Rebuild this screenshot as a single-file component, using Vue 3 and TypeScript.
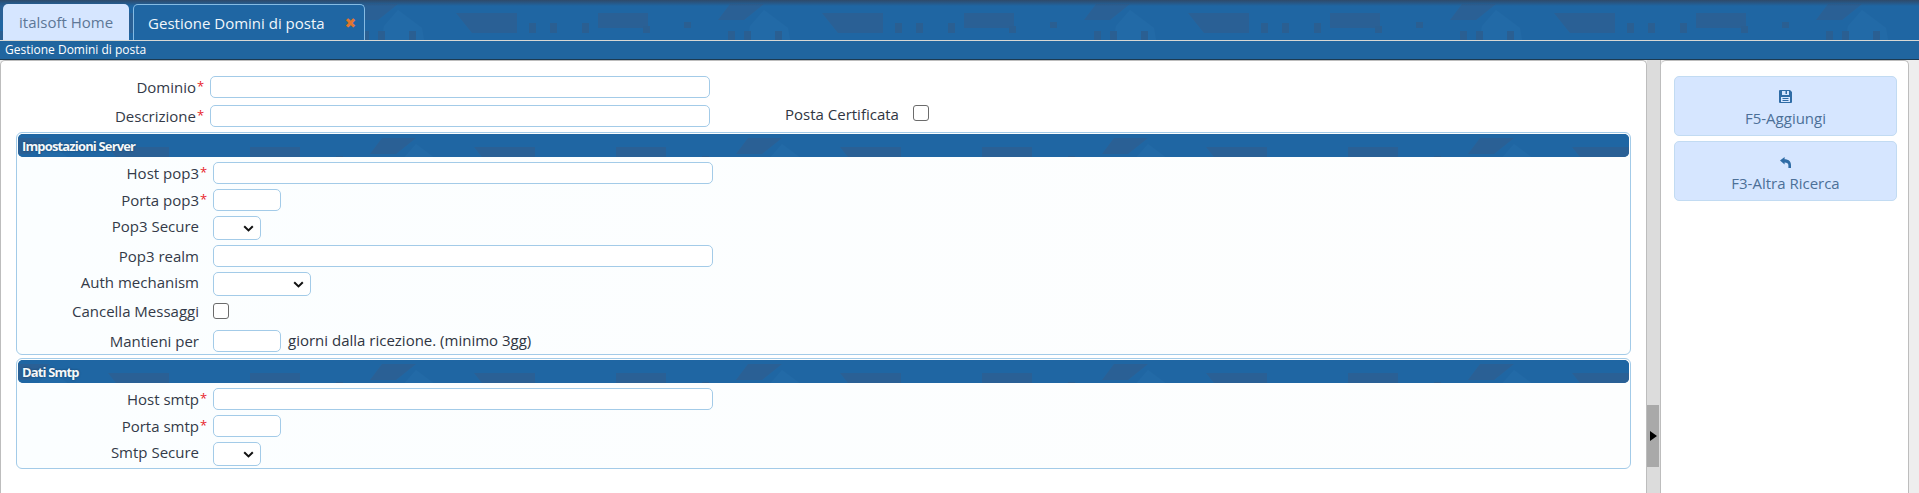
<script setup lang="ts">
interface Field {
  label: string
  kind: 'text' | 'short' | 'select' | 'wide-select' | 'check' | 'days'
  required?: boolean
}

const serverFields: Field[] = [
  { label: 'Host pop3', kind: 'text', required: true },
  { label: 'Porta pop3', kind: 'short', required: true },
  { label: 'Pop3 Secure', kind: 'select' },
  { label: 'Pop3 realm', kind: 'text' },
  { label: 'Auth mechanism', kind: 'wide-select' },
  { label: 'Cancella Messaggi', kind: 'check' },
  { label: 'Mantieni per', kind: 'days' },
]

const smtpFields: Field[] = [
  { label: 'Host smtp', kind: 'text', required: true },
  { label: 'Porta smtp', kind: 'short', required: true },
  { label: 'Smtp Secure', kind: 'select' },
]

const groups = [
  { title: 'Impostazioni Server', fields: serverFields },
  { title: 'Dati Smtp', fields: smtpFields },
]
</script>

<template>
  <div class="page">
    <svg class="defs" width="0" height="0" aria-hidden="true">
      <defs>
        <pattern id="roofs" patternUnits="userSpaceOnUse" width="366" height="40" x="352">
          <path d="M0 0H366V40H0Z" fill="#1f66a3" />
          <path d="M46 10L70 28L72 40H30L32 26Z" fill="#226aa7" />
          <path d="M12 4H46L26 20H0ZM104 13H165V33H120ZM246 13H296V28H246Z" fill="#2a6095" />
          <path d="M177 23H184V33H177ZM198 23H205V33H198ZM230 23H237V33H230ZM10 31H17V40H10ZM26 31H33V40H26ZM57 31H64V40H57ZM291 26H298V33H291ZM332 22H339V28H332Z" fill="#2a5f92" />
        </pattern>
      </defs>
    </svg>

    <header class="banner">
      <svg class="roofs"><rect width="100%" height="100%" fill="url(#roofs)" /></svg>
      <nav class="tabs">
        <div class="tab">italsoft Home</div>
        <div class="tab active">
          <span>Gestione Domini di posta</span>
          <span class="close">✖</span>
        </div>
      </nav>
    </header>
    <div class="subtitle">Gestione Domini di posta</div>

    <main class="workspace">
      <section class="form-panel">
        <div class="form-row top first">
          <label class="field-label">Dominio</label>
          <span class="star">*</span>
          <input class="input" type="text" />
        </div>
        <div class="form-row top">
          <label class="field-label">Descrizione</label>
          <span class="star">*</span>
          <input class="input" type="text" />
          <label class="certified-label">Posta Certificata</label>
          <input class="check certified-check" type="checkbox" />
        </div>

        <div v-for="group in groups" :key="group.title" class="group">
          <div class="group-title">
            <svg class="roofs"><rect width="100%" height="100%" fill="url(#roofs)" /></svg>
            <span>{{ group.title }}</span>
          </div>
          <div
            v-for="field in group.fields"
            :key="field.label"
            class="form-row"
            :class="{ 'check-row': field.kind === 'check', 'select-row': field.kind.includes('select') }"
          >
            <label class="field-label">{{ field.label }}</label>
            <span class="star">{{ field.required ? '*' : '' }}</span>
            <input v-if="field.kind === 'text'" class="input" type="text" />
            <input v-else-if="field.kind === 'short'" class="input short" type="text" />
            <select v-else-if="field.kind === 'select'" class="select"></select>
            <select v-else-if="field.kind === 'wide-select'" class="select wide"></select>
            <input v-else-if="field.kind === 'check'" class="check" type="checkbox" />
            <template v-else>
              <input class="input short" type="text" />
              <span class="hint">giorni dalla ricezione. (minimo 3gg)</span>
            </template>
          </div>
        </div>
      </section>

      <div class="splitter">
        <div class="thumb"><i class="arrow"></i></div>
      </div>

      <aside class="actions">
        <button class="action" type="button">
          <svg width="13" height="13" viewBox="0 0 13 13">
            <path
              fill="#2f6ca6"
              fill-rule="evenodd"
              d="M1 0H11L13 2V12A1 1 0 0 1 12 13H1A1 1 0 0 1 0 12V1A1 1 0 0 1 1 0ZM3 1V5H10V1H8V4H6.5V1ZM2 7V12H11V7ZM3.5 8H9.5V9H3.5ZM3.5 10H9.5V11H3.5Z"
            />
          </svg>
          <span>F5-Aggiungi</span>
        </button>
        <button class="action" type="button">
          <svg class="reply" width="11" height="11" viewBox="0 0 11 11">
            <path
              fill="#2f6ca6"
              d="M0 3.6L4.6 0V2.3C8.4 2.3 11 4.4 11 8V11H8.4V8.4C8.4 6.6 7 5.6 4.6 5.6V7.4Z"
            />
          </svg>
          <span>F3-Altra Ricerca</span>
        </button>
      </aside>
    </main>
  </div>
</template>

<style>
html,
body {
  margin: 0;
  overflow: hidden;
}
</style>

<style scoped>
.page {
  display: flex;
  flex-direction: column;
  width: 1919px;
  height: 493px;
  overflow: hidden;
  background: #eee;
  font-family: 'Open Sans', 'Liberation Sans', sans-serif;
  font-size: 15px;
  color: #2f3542;
}

.defs {
  position: absolute;
}

.roofs {
  position: absolute;
  inset: 0;
  width: 100%;
  height: 100%;
}

.banner {
  position: relative;
  flex: none;
  height: 40px;
  background: #1f66a3;
}

.banner::after {
  content: '';
  position: absolute;
  inset: 0 0 auto;
  height: 6px;
  background: linear-gradient(#2f4a6a, rgba(47, 74, 106, 0));
}

.tabs {
  position: relative;
  z-index: 1;
  display: flex;
  align-items: flex-end;
  gap: 4px;
  height: 40px;
  padding-left: 3px;
}

.tab {
  display: flex;
  align-items: center;
  height: 36px;
  box-sizing: border-box;
  padding: 0 16px;
  border-radius: 5px 5px 0 0;
  background: #d6e6ff;
  color: #5d7797;
}

.tab.active {
  justify-content: space-between;
  width: 232px;
  padding: 0 8px 0 14px;
  border: 1px solid #85bbe3;
  border-bottom: 0;
  background: #1f66a3;
  color: #f1f6fb;
}

.close {
  color: #e0762f;
  font-size: 14px;
  font-family: 'DejaVu Sans', sans-serif;
}

.subtitle {
  flex: none;
  height: 20px;
  box-sizing: border-box;
  padding-left: 5px;
  border-top: 1px solid #d8d8d4;
  border-bottom: 1px solid #1c3a52;
  background: #20659f;
  color: #fff;
  font-size: 12px;
  line-height: 17px;
}

.workspace {
  display: flex;
  flex: 1;
  min-height: 0;
  padding-right: 10px;
}

.form-panel {
  flex: 1;
  min-width: 0;
  box-sizing: border-box;
  padding: 15px 15px 0;
  border: 1px solid #bdbdbd;
  border-bottom: 0;
  border-radius: 5px 5px 0 0;
  background: #fff;
}

.form-row {
  display: flex;
  align-items: center;
  height: 22px;
  margin-bottom: 5px;
}

.form-row.select-row {
  height: 24px;
}

.form-row.select-row .field-label {
  padding-bottom: 4px;
}

.form-row:last-child {
  margin-bottom: 1px;
}

.form-row.first {
  margin-bottom: 7px;
}

.form-row.top {
  align-items: flex-start;
}

.form-row.top .field-label {
  width: 180px;
  padding: 0;
  line-height: 22px;
}

.field-label {
  flex: none;
  width: 181px;
  padding-bottom: 1px;
  text-align: right;
  white-space: nowrap;
  color: #333a48;
}

.star {
  flex: none;
  box-sizing: border-box;
  width: 14px;
  height: 22px;
  padding-left: 1px;
  color: #e8232a;
  font-size: 13px;
  line-height: 20px;
}

.input,
.select {
  box-sizing: border-box;
  margin: 0;
  border: 1px solid #a3cbe8;
  border-radius: 5px;
  background: #fff;
  outline: none;
}

.input {
  width: 500px;
  height: 22px;
  padding: 0 4px;
}

.input.short {
  width: 68px;
}

.select {
  appearance: none;
  flex: none;
  width: 48px;
  height: 24px;
  background: #fff url("data:image/svg+xml,%3Csvg xmlns='http://www.w3.org/2000/svg' width='11' height='7' viewBox='0 0 11 7'%3E%3Cpath d='M1.2 1.2L5.5 5.4L9.8 1.2' fill='none' stroke='%23111' stroke-width='2'/%3E%3C/svg%3E") no-repeat right 6px center;
  font-size: 14px;
  font-family: inherit;
}

.select.wide {
  width: 98px;
}

.check {
  flex: none;
  appearance: none;
  box-sizing: border-box;
  width: 16px;
  height: 16px;
  margin: 0;
  border: 1px solid #6b6b6b;
  border-radius: 3px;
  background: #fff;
}

.check-row {
  align-items: flex-start;
  height: 24px;
  padding-top: 2px;
  box-sizing: border-box;
}

.check-row .field-label {
  margin-top: -3px;
  line-height: 22px;
}

.certified-label {
  margin-left: 75px;
  line-height: 18px;
  white-space: nowrap;
}

.certified-check {
  margin-left: 14px;
}

.hint {
  margin-left: 7px;
  padding-bottom: 3px;
  white-space: nowrap;
}

.group {
  margin-bottom: 3px;
  padding: 1px;
  border: 1px solid #a3cbe8;
  border-radius: 6px;
  background: linear-gradient(90deg, #fbfeff, #fdfefe);
}

.group-title {
  position: relative;
  height: 23px;
  margin-bottom: 5px;
  overflow: hidden;
  border-radius: 5px;
  background: #1f66a3;
  color: #f4f8fb;
  font-size: 13px;
  font-weight: 700;
  letter-spacing: -0.85px;
  line-height: 24px;
  text-shadow: 0 0 2px #123a5c;
}

.group-title span {
  position: relative;
  padding-left: 4px;
}

.splitter {
  flex: none;
  width: 13px;
  border-right: 1px solid #bdbdbd;
  background: #dcdcdc;
}

.thumb {
  display: flex;
  align-items: center;
  width: 12px;
  height: 62px;
  margin-top: 345px;
  background: #a9a9a9;
}

.arrow {
  width: 0;
  height: 0;
  margin-left: 3px;
  border-top: 5px solid transparent;
  border-bottom: 5px solid transparent;
  border-left: 7px solid #000;
}

.actions {
  display: flex;
  flex: none;
  flex-direction: column;
  gap: 5px;
  width: 248px;
  box-sizing: border-box;
  padding: 15px 11px 0 13px;
  border-top: 1px solid #bdbdbd;
  border-right: 1px solid #bdbdbd;
  border-radius: 5px 5px 0 0;
  background: #fff;
}

.action {
  display: flex;
  flex-direction: column;
  align-items: center;
  gap: 5px;
  height: 60px;
  box-sizing: border-box;
  padding: 13px 0 0;
  border: 1px solid #c2dbf2;
  border-radius: 5px;
  background: #d6e6ff;
  color: #4c7098;
  font-family: inherit;
  font-size: 15px;
  line-height: 20px;
}

.reply {
  margin-top: 2px;
}
</style>
